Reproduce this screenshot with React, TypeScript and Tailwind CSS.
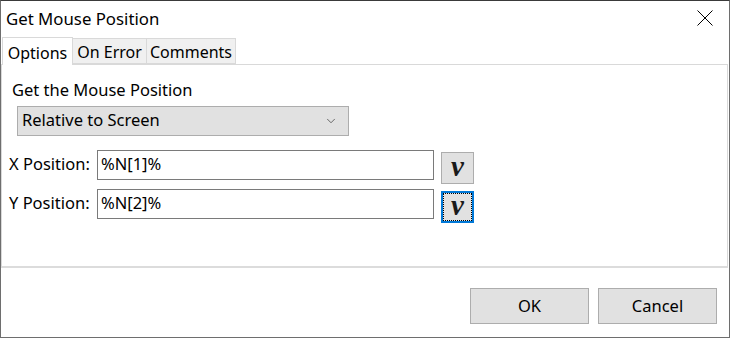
import { ChevronDown } from "lucide-react";

function VarButton({ focused }: { focused?: boolean }) {
  return (
    <button
      className={
        "ml-[7px] flex h-[32px] w-[33px] items-center justify-center bg-[#e1e1e1] " +
        (focused ? "border-2 border-[#0078d7]" : "border border-[#adadad]")
      }
    >
      <span
        className={
          "flex h-full w-full items-center justify-center " +
          (focused ? "border border-dotted border-black" : "")
        }
      >
        <span className="-mt-[3px] font-['Liberation_Serif',serif] text-[29px] font-bold italic leading-none text-[#1a1a1a]">
          v
        </span>
      </span>
    </button>
  );
}

function PositionRow({ label, value, focused }: { label: string; value: string; focused?: boolean }) {
  return (
    <div className="flex h-[30px] items-start">
      <span className="w-[95px] pl-[7px] pt-[6px] text-[16.5px] leading-none">{label}</span>
      <div className="flex h-[30px] w-[337px] items-center border border-[#7a7a7a] bg-white pl-[3px] text-[16.5px]">
        {value}
      </div>
      <div className="pt-[2px]">
        <VarButton focused={focused} />
      </div>
    </div>
  );
}

export default function App() {
  return (
    <div className="h-[338px] w-[730px] overflow-hidden bg-white font-['Noto_Sans',sans-serif] text-black">
      <div className="flex h-full w-full flex-col border-x border-b border-t border-x-[#6e6e6e] border-b-[#6e6e6e] border-t-[#3a3a3a]">
        {/* Title bar */}
        <div className="flex h-[36px] items-center justify-between pl-[5px] pr-[16px]">
          <span className="text-[16.8px]">Get Mouse Position</span>
          <svg width="16" height="16" viewBox="0 0 16 16" className="-mt-[2px]">
            <path d="M0.5 0.5 L15.5 15.5 M15.5 0.5 L0.5 15.5" stroke="#000" strokeWidth="1" fill="none" />
          </svg>
        </div>

        {/* Tabs */}
        <div className="flex items-end pl-[1px] text-[16px]">
          <div className="relative z-10 -mb-px flex h-[28px] w-[71px] items-center justify-center border border-b-0 border-[#d9d9d9] bg-white pt-[2px]">
            Options
          </div>
          <div className="flex h-[26px] w-[74px] items-center justify-center border border-l-0 border-[#d9d9d9] bg-[#f0f0f0] pt-[2px]">
            On Error
          </div>
          <div className="flex h-[26px] w-[89px] items-center justify-center border border-l-0 border-[#d9d9d9] bg-[#f0f0f0] pt-[2px]">
            Comments
          </div>
        </div>

        {/* Panel */}
        <div className="mr-[1px] h-[204px] border border-[#d9d9d9] border-b-2 border-b-[#dcdcdc] bg-white">
          <div className="pl-[10px] pt-[17px] text-[16.5px] leading-none">Get the Mouse Position</div>
          <div className="ml-[15px] mt-[7px] flex h-[30px] w-[332px] items-center justify-between border border-[#adadad] bg-[#e1e1e1] pl-[4px] pr-[10px] text-[16.5px]">
            <span>Relative to Screen</span>
            <ChevronDown size={14} strokeWidth={1.2} className="text-[#333]" />
          </div>
          <div className="mt-[14px] flex flex-col gap-[9px]">
            <PositionRow label="X Position:" value="%N[1]%" />
            <PositionRow label="Y Position:" value="%N[2]%" focused />
          </div>
        </div>

        {/* Footer */}
        <div className="flex flex-1 items-end justify-end gap-[9px] pb-[13px] pr-[12px] text-[16.5px]">
          <button className="h-[36px] w-[119px] border border-[#adadad] bg-[#e1e1e1]">OK</button>
          <button className="h-[36px] w-[119px] border border-[#adadad] bg-[#e1e1e1]">Cancel</button>
        </div>
      </div>
    </div>
  );
}
